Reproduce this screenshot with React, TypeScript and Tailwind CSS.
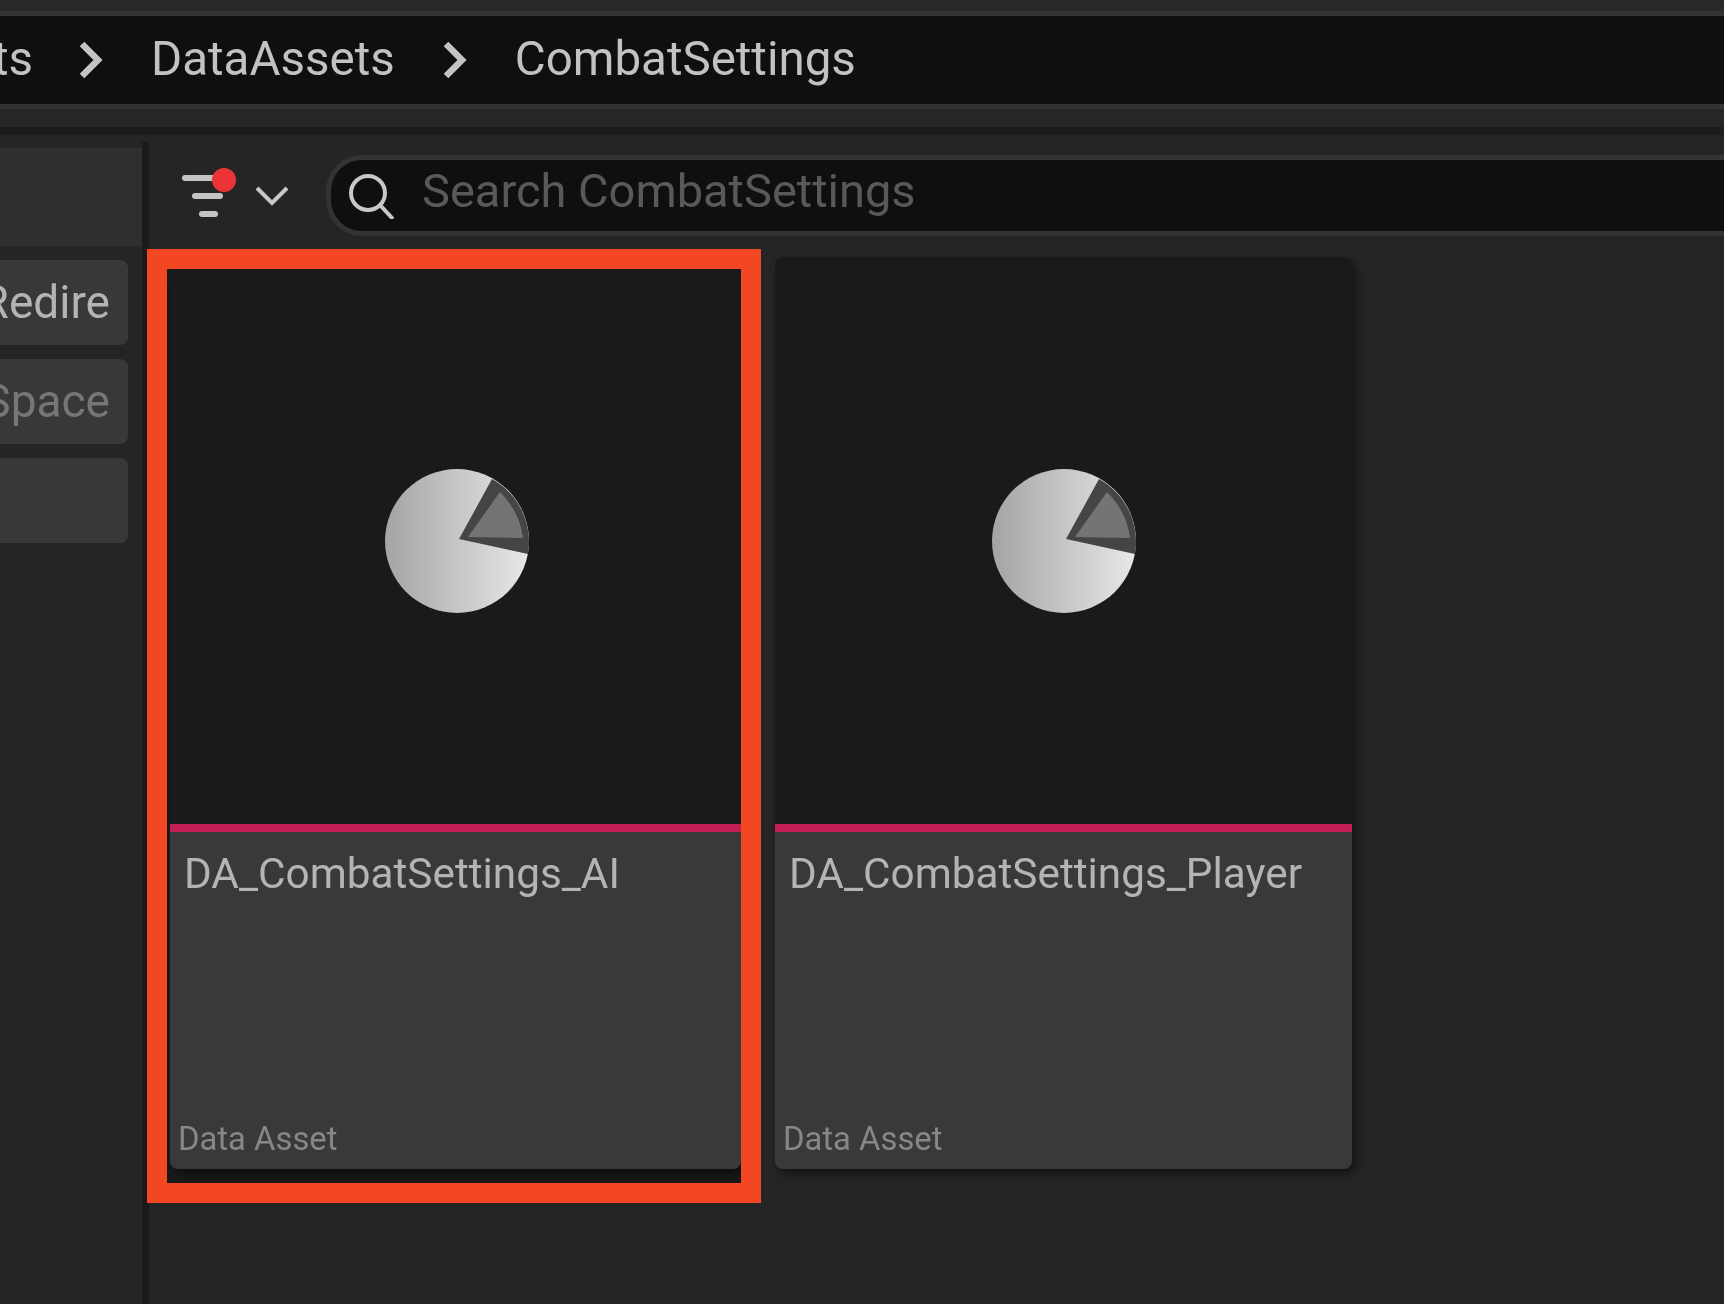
import React from 'react';

function PieIcon() {
  // 146px data asset glyph, coordinates follow the centre of the circle
  return (
    <svg width="146" height="146" viewBox="0 0 146 146">
      <defs>
        <linearGradient id="pie-fill" x1="0" y1="0" x2="1" y2="0">
          <stop offset="0" stopColor="#a4a4a4" />
          <stop offset="1" stopColor="#e8e8e8" />
        </linearGradient>
      </defs>
      <circle cx="73" cy="73" r="72" fill="url(#pie-fill)" />
      <path d="M75 71 L108 11 A72 72 0 0 1 144 86 Z" fill="#454545" />
      <path d="M84 69 L116 24 Q136 44 139 70 Z" fill="#747474" />
    </svg>
  );
}

function FilterIcon() {
  return (
    <svg width="55" height="52" viewBox="0 0 55 52" fill="none" stroke="#c4c4c4" strokeWidth="6" strokeLinecap="round">
      <path d="M3 12 H32" />
      <path d="M13 30 H38" />
      <path d="M20 48 H33" />
      <circle cx="42" cy="14" r="12" fill="#ee3338" stroke="none" />
    </svg>
  );
}

function Chevron({ className }: { className?: string }) {
  return (
    <svg className={className} width="26" height="38" viewBox="0 0 26 38" fill="none" stroke="#c4c4c4" strokeWidth="6.5">
      <path d="M4 3 L20 19 L4 35" />
    </svg>
  );
}

interface AssetCardProps {
  name: string;
  thumbClass: string;
}

function AssetCard({ name, thumbClass }: AssetCardProps) {
  return (
    <div className="flex h-full flex-col overflow-hidden rounded-lg">
      <div className={`flex flex-none items-center justify-center bg-[#1a1a1a] ${thumbClass}`}>
        <PieIcon />
      </div>
      <div className="h-2 flex-none bg-[#c41f55]" />
      <div className="flex flex-1 flex-col justify-between bg-[#393939] pb-[10px]">
        <div className="pl-[14px] pt-[17px] text-[42.3px] leading-[50px] text-[#b4b4b4]">{name}</div>
        <div className="pl-[8px] text-[32.8px] leading-[40px] text-[#878787]">Data Asset</div>
      </div>
    </div>
  );
}

export default function App() {
  const sidebarButtons = [
    { label: 'Redire', color: 'text-[#b4b4b4]' },
    { label: 'Space', color: 'text-[#767676]' },
    { label: '', color: '' },
  ];

  return (
    <div className="flex h-[1304px] w-[1724px] flex-col overflow-hidden bg-[#252525] font-['Roboto',sans-serif] blur-[0.7px]">
      {/* Breadcrumb */}
      <div className="h-[11px] flex-none bg-[#282828]" />
      <div className="flex h-[98px] flex-none items-center border-y-[5px] border-[#333333] bg-[#0f0f0f] text-[47.5px] text-[#c2c2c2]">
        <span className="-ml-[7px]">ts</span>
        <Chevron className="ml-[45px]" />
        <span className="ml-[47px]">DataAssets</span>
        <Chevron className="ml-[47px]" />
        <span className="ml-[47px]">CombatSettings</span>
      </div>
      <div className="h-[18px] flex-none bg-[#262626]" />
      <div className="h-2 flex-none bg-[#1c1c1c]" />

      <div className="flex flex-1">
        {/* Left filter list */}
        <div className="flex w-[142px] flex-none flex-col pt-[13px]">
          <div className="h-[98px] bg-[#2f2f2f]" />
          <div className="mt-[14px] flex w-[128px] flex-col gap-[14px]">
            {sidebarButtons.map((b, i) => (
              <div
                key={i}
                className={`flex h-[85px] items-center justify-end overflow-hidden rounded-r-lg bg-[#383838] pr-[18px] text-[46px] ${b.color}`}
              >
                {b.label}
              </div>
            ))}
          </div>
        </div>
        <div className="mt-[7px] w-[7px] flex-none bg-[#1a1a1a]" />

        {/* Asset area */}
        <div className="min-w-0 flex-1">
          <div className="flex h-[114px] items-start pt-[20px]">
            <div className="ml-[33px] mt-[11px]">
              <FilterIcon />
            </div>
            <svg className="ml-[18px] mt-[31px]" width="34" height="20" viewBox="0 0 34 20" fill="none" stroke="#c8c8c8" strokeWidth="4">
              <path d="M2 2 L17 17 L32 2" />
            </svg>
            <div className="ml-[37px] flex h-[81px] flex-1 items-center rounded-l-[36px] border-y-[5px] border-l-[5px] border-[#333333] bg-[#0f0f0f] pl-[17px]">
              <svg width="46" height="46" viewBox="0 0 46 46" fill="none" stroke="#c8c8c8" strokeWidth="4">
                <circle cx="20" cy="20" r="17" />
                <path d="M32 32 L45 46" />
              </svg>
              <span className="mb-[8px] ml-[28px] text-[47px] text-[#595959]">Search CombatSettings</span>
            </div>
          </div>

          <div className="-ml-[2px] flex items-start gap-[14px]">
            <div className="h-[954px] w-[614px] flex-none overflow-hidden border-[20px] border-[#f34723] bg-[#1a1a1a] pb-[14px] pl-[3px]">
              <div className="h-full rounded-lg shadow-[4px_5px_10px_rgba(0,0,0,0.5)]">
                <AssetCard name="DA_CombatSettings_AI" thumbClass="h-[555px] pb-[12px] pl-[3px]" />
              </div>
            </div>
            <div className="mt-[8px] h-[912px] w-[577px] flex-none rounded-lg shadow-[4px_5px_10px_rgba(0,0,0,0.5)]">
              <AssetCard name="DA_CombatSettings_Player" thumbClass="h-[567px] pl-[1px]" />
            </div>
          </div>
        </div>
      </div>
    </div>
  );
}
